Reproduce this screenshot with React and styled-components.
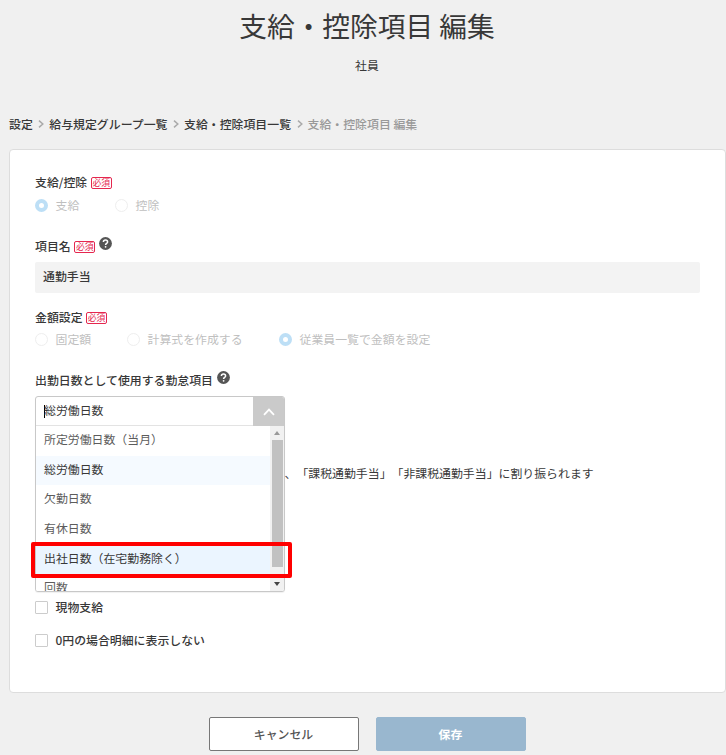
import React, {useState} from 'react';
import styled, {createGlobalStyle, css} from 'styled-components';

const colours = {
  PAGE: '#f0f0f0',
  TEXT: '#383838',
  MUTED: '#999',
  DISABLED: '#bfbfbf',
  RED: '#e5274f',
  BLUE: '#99b7cf',
};

const GlobalStyle = createGlobalStyle`
  * {
    box-sizing: border-box;
  }

  body {
    margin: 0;
    height: 755px;
    overflow: hidden;
    background: ${colours.PAGE};
    color: ${colours.TEXT};
    font-family: 'Noto Sans CJK JP', sans-serif;
    font-size: 11.9px;
    line-height: 18px;
    text-spacing-trim: space-all;
  }
`;

const Page = styled.div`
  width: 726px;
  height: 755px;
  overflow: hidden;
`;

const Header = styled.header`
  padding: 5px 0 0 8px;
  text-align: center;
`;

const Title = styled.h1`
  margin: 0 0 11px;
  font-size: 27.7px;
  font-weight: 400;
  line-height: 40px;
`;

const Subtitle = styled.p`
  margin: 0;
`;

const Breadcrumb = styled.nav`
  display: flex;
  align-items: center;
  margin: 41px 0 16px 9px;
  font-weight: 500;
`;

const Crumb = styled.span`
  color: ${props => props.$current ? colours.MUTED : colours.TEXT};
`;

const Separator = styled.svg`
  width: 6px;
  height: 8px;
  margin: 0 5px 0 5.5px;
  fill: none;
  stroke: #aaa;
  stroke-width: 1.5;
`;

const Card = styled.main`
  width: 717px;
  height: 544px;
  margin-left: 9px;
  padding: 23px 25px;
  background: #fff;
  border: 1px solid #ddd;
  border-radius: 4px;
`;

const Label = styled.div`
  display: flex;
  align-items: center;
  height: 18px;
  margin-top: ${props => props.$top || 0}px;
  font-weight: 500;
`;

const Required = styled.span`
  width: 21px;
  height: 12px;
  margin: 2px 0 0 3.5px;
  border: 1px solid ${colours.RED};
  border-radius: 2px;
  color: ${colours.RED};
  font-size: 8.8px;
  font-weight: 400;
  line-height: 10px;
  text-align: center;
  white-space: nowrap;
`;

const HelpIcon = styled.svg`
  width: 13px;
  height: 13px;
  margin: -5px 0 0 4px;
`;

const RadioRow = styled.div`
  display: flex;
  height: 18px;
  margin-top: ${props => props.$top}px;
`;

const RadioLabel = styled.label`
  display: flex;
  align-items: center;
  width: ${props => props.$width}px;
  color: ${colours.DISABLED};
  white-space: nowrap;
`;

const RadioMark = styled.span`
  width: 13px;
  height: 13px;
  margin-right: 7.5px;
  border: 1px solid #eee;
  border-radius: 50%;

  ${props => props.$checked && css`
    border: 4px solid #bddff6;
  `}
`;

const NameField = styled.div`
  height: 31px;
  margin-top: 7px;
  padding: 0 8px;
  background: #f3f3f3;
  border-radius: 2px;
  font-weight: 500;
  line-height: 27px;
`;

const SelectArea = styled.div`
  position: relative;
  width: 250px;
  height: 30px;
  margin-top: 7px;
`;

const Select = styled.div`
  position: absolute;
  top: 0;
  left: 0;
  width: 250px;
  height: 196px;
  overflow: hidden;
  background: #fff;
  border: 1px solid #c8c8c8;
  border-radius: 3px;
  box-shadow: 0 1px 1px rgba(0, 0, 0, 0.06);
`;

const SelectValue = styled.div`
  display: flex;
  justify-content: space-between;
  height: 29px;
  padding-left: 8px;
  border-bottom: 1px solid #e3e3e3;
  line-height: 26px;
`;

const Caret = styled.span`
  display: inline-block;
  width: 1px;
  height: 13px;
  margin-right: -1px;
  background: #000;
  vertical-align: -3px;
`;

const Arrow = styled.span`
  display: flex;
  align-items: center;
  justify-content: center;
  width: 31px;
  height: 29px;
  background: #cacaca;
`;

const Menu = styled.div`
  display: flex;
  height: 165px;
`;

const Options = styled.div`
  flex: 1;
  overflow: hidden;
`;

const Option = styled.div`
  height: 29.7px;
  padding-left: 8px;
  color: ${props => props.$state ? colours.TEXT : '#5c5c5c'};
  background: ${props => ({selected: '#f5faff', focused: '#ebf5ff'}[props.$state] || '#fff')};
  line-height: 26px;
`;

const Scrollbar = styled.div`
  display: flex;
  flex-direction: column;
  align-items: center;
  width: 14px;
  padding: 5px 0;
  background: #f1f1f1;
`;

const Thumb = styled.div`
  width: 11px;
  height: 127px;
  margin: 5px 0 auto;
  background: #c1c1c1;
`;

const Highlight = styled.div`
  position: absolute;
  top: 146px;
  left: -4px;
  width: 261px;
  height: 36px;
  border: 4px solid #f00;
  border-radius: 2px;
`;

const Note = styled.p`
  margin: 38px 0 0 249.5px;
  white-space: nowrap;
`;

const CheckLabel = styled.label`
  display: flex;
  align-items: center;
  height: 18px;
  margin-top: ${props => props.$top}px;
  font-weight: 500;
`;

const Box = styled.span`
  width: 13px;
  height: 13px;
  margin-right: 7.5px;
  border: 1px solid #ccc;
  border-radius: 1px;
`;

const Actions = styled.div`
  display: flex;
  justify-content: center;
  gap: 17px;
  margin-top: 24px;
  padding-left: 8px;
`;

const Button = styled.button`
  width: 150px;
  height: 34px;
  padding: 0;
  border: 1px solid ${props => props.$primary ? colours.BLUE : '#777'};
  border-radius: 2px;
  background: ${props => props.$primary ? colours.BLUE : '#fff'};
  color: ${props => props.$primary ? '#fff' : '#555'};
  font: inherit;
  font-weight: ${props => props.$primary ? 700 : 500};
`;

const crumbs = ['設定', '給与規定グループ一覧', '支給・控除項目一覧', '支給・控除項目 編集'];

const options = [
  '所定労働日数（当月）',
  '総労働日数',
  '欠勤日数',
  '有休日数',
  '出社日数（在宅勤務除く）',
  '回数',
];

const Help = () => (
  <HelpIcon viewBox='0 0 13 13'>
    <circle cx='6.5' cy='6.5' r='6.4' fill='#555'/>
    <path d='M4.4 5.1C4.4 3.8 5.3 3 6.5 3s2.1.8 2.1 1.9c0 1.5-2 1.5-2 3' fill='none' stroke='#fff' strokeWidth='1.5'/>
    <circle cx='6.6' cy='9.8' r='.9' fill='#fff'/>
  </HelpIcon>
);

const Radio = ({checked, width, children}) => (
  <RadioLabel $width={width}>
    <RadioMark $checked={checked}/>
    {children}
  </RadioLabel>
);

const ItemSelect = () => {
  const [focused] = useState(4);
  const selected = 1;

  const stateOf = (index) => {
    if (index === focused) return 'focused';
    return index === selected ? 'selected' : undefined;
  };

  return (
    <SelectArea>
      <Select>
        <SelectValue>
          <span><Caret/>{options[selected]}</span>
          <Arrow>
            <svg width='12' height='8' viewBox='0 0 12 8' fill='none' stroke='#fff' strokeWidth='1.8'>
              <path d='M1 6.8 6 1.6l5 5.2'/>
            </svg>
          </Arrow>
        </SelectValue>
        <Menu>
          <Options>
            {options.map((option, index) => (
              <Option key={option} $state={stateOf(index)}>{option}</Option>
            ))}
          </Options>
          <Scrollbar>
            <svg width='6' height='4'><path d='M0 4 3 0l3 4z' fill='#999'/></svg>
            <Thumb/>
            <svg width='6' height='4'><path d='M0 0h6L3 4z' fill='#444'/></svg>
          </Scrollbar>
        </Menu>
      </Select>
      <Highlight/>
    </SelectArea>
  );
};

const App = () => (
  <Page>
    <GlobalStyle/>
    <Header>
      <Title>支給・控除項目 編集</Title>
      <Subtitle>社員</Subtitle>
    </Header>
    <Breadcrumb>
      {crumbs.map((crumb, index) => (
        <React.Fragment key={crumb}>
          {index > 0 && <Separator viewBox='0 0 6 8'><path d='M1 .6 4.8 4 1 7.4'/></Separator>}
          <Crumb $current={index === crumbs.length - 1}>{crumb}</Crumb>
        </React.Fragment>
      ))}
    </Breadcrumb>
    <Card>
      <Label>支給/控除<Required>必須</Required></Label>
      <RadioRow $top={5}>
        <Radio width={80} checked>支給</Radio>
        <Radio width={80}>控除</Radio>
      </RadioRow>

      <Label $top={23}>項目名<Required>必須</Required><Help/></Label>
      <NameField>通勤手当</NameField>

      <Label $top={15}>金額設定<Required>必須</Required></Label>
      <RadioRow $top={4}>
        <Radio width={92}>固定額</Radio>
        <Radio width={152}>計算式を作成する</Radio>
        <Radio width={160} checked>従業員一覧で金額を設定</Radio>
      </RadioRow>

      <Label $top={23}>出勤日数として使用する勤怠項目<Help/></Label>
      <ItemSelect/>
      <Note>、「課税通勤手当」「非課税通勤手当」に割り振られます</Note>

      <CheckLabel $top={116}><Box/>現物支給</CheckLabel>
      <CheckLabel $top={15}><Box/>0円の場合明細に表示しない</CheckLabel>
    </Card>
    <Actions>
      <Button>キャンセル</Button>
      <Button $primary>保存</Button>
    </Actions>
  </Page>
);

export default App;
